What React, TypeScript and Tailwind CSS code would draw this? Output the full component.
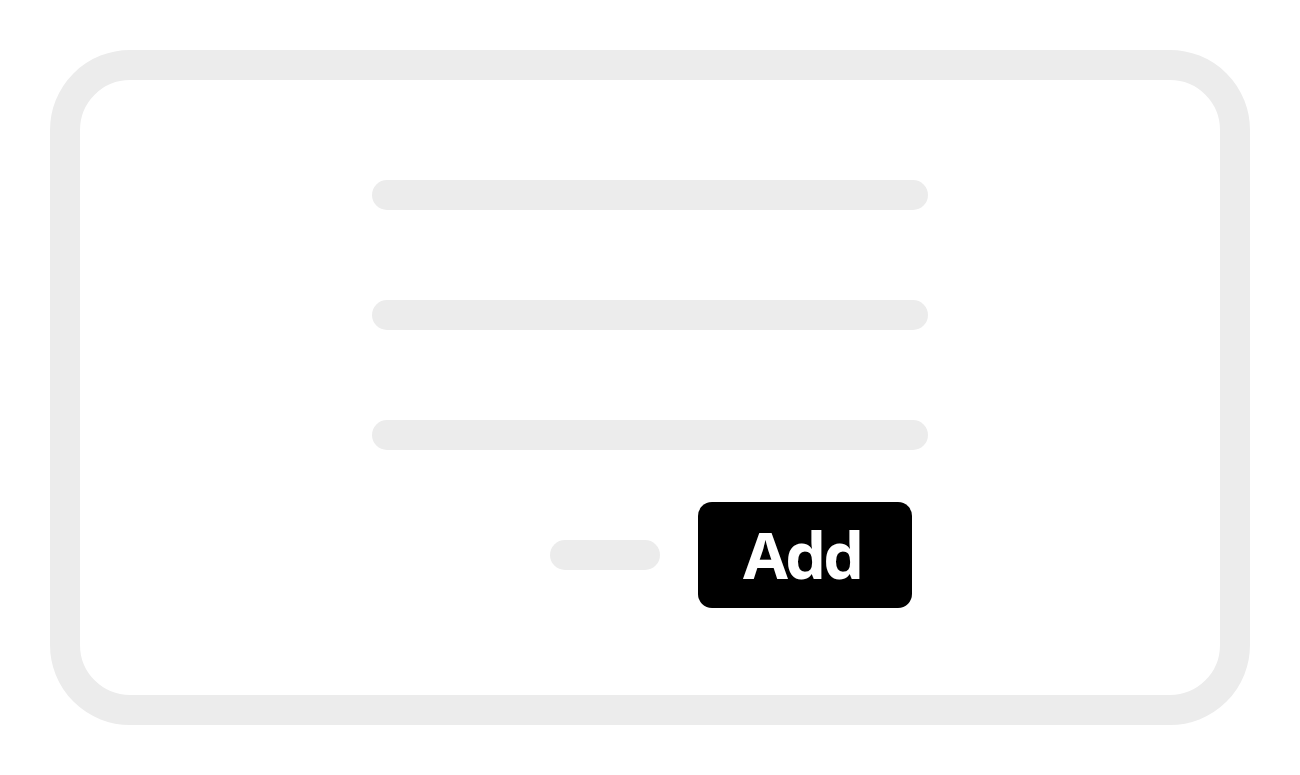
export default function App() {
  return (
    <div className="w-[1300px] h-[775px] bg-white p-[50px]">
      <div className="w-[1200px] h-[675px] border-[30px] border-[#ececec] rounded-[80px] bg-white flex flex-col items-center pt-[100px]">
        <div className="w-[556px] flex flex-col">
          <div className="h-[30px] rounded-full bg-[#ececec]" />
          <div className="h-[30px] rounded-full bg-[#ececec] mt-[90px]" />
          <div className="h-[30px] rounded-full bg-[#ececec] mt-[90px]" />
          <div className="flex items-center justify-end mt-[52px] pr-[16px] gap-[38px]">
            <div className="w-[110px] h-[30px] rounded-full bg-[#ececec]" />
            <div
              className="w-[214px] h-[106px] rounded-[14px] bg-black text-white flex items-center justify-center font-bold text-[65px] leading-none tracking-[-3px] pb-[2px] pr-[6px]"
              style={{ fontFamily: '"Noto Sans", sans-serif' }}
            >
              Add
            </div>
          </div>
        </div>
      </div>
    </div>
  );
}
